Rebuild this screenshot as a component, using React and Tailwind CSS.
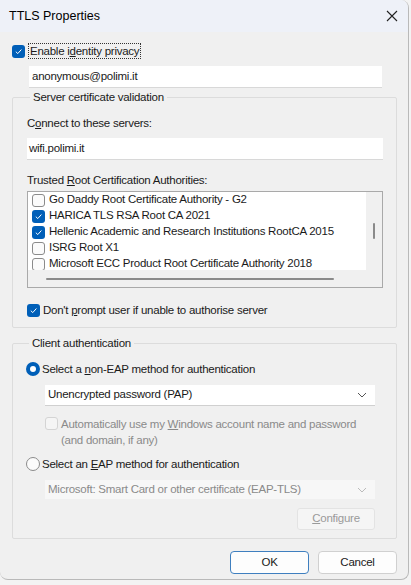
import React from "react";

const font = { fontFamily: '"Liberation Sans", Arial, sans-serif' };

function Check({ checked, disabled }) {
  if (checked) {
    return (
      <span className="inline-flex w-[13px] h-[13px] shrink-0 items-center justify-center rounded-[3px] bg-[#005fb8]">
        <svg width="9" height="9" viewBox="0 0 10 10">
          <path d="M2 5.2 L4.2 7.3 L8.2 2.8" fill="none" stroke="white" strokeWidth="1.1" />
        </svg>
      </span>
    );
  }
  return (
    <span
      className={
        "inline-block w-[13px] h-[13px] shrink-0 rounded-[3px] border " +
        (disabled ? "border-[#d4d4d4] bg-[#f5f5f5]" : "border-[#8b8b8b] bg-[#fbfbfb]")
      }
    />
  );
}

function Radio({ checked }) {
  if (checked) {
    return (
      <span className="inline-flex w-[14px] h-[14px] shrink-0 items-center justify-center rounded-full bg-[#005fb8]">
        <span className="w-[6px] h-[6px] rounded-full bg-white" />
      </span>
    );
  }
  return <span className="inline-block w-[14px] h-[14px] shrink-0 rounded-full border border-[#8b8b8b] bg-[#fbfbfb]" />;
}

function Chevron({ color }) {
  return (
    <svg width="10" height="6" viewBox="0 0 10 6">
      <path d="M1 1 L5 5 L9 1" fill="none" stroke={color} strokeWidth="1" />
    </svg>
  );
}

const certs = [
  { name: "Go Daddy Root Certificate Authority - G2", checked: false },
  { name: "HARICA TLS RSA Root CA 2021", checked: true },
  { name: "Hellenic Academic and Research Institutions RootCA 2015", checked: true },
  { name: "ISRG Root X1", checked: false },
  { name: "Microsoft ECC Product Root Certificate Authority 2018", checked: false },
];

export default function App() {
  return (
    <div className="w-[411px] h-[585px] bg-[#f3f3f3] text-[11.5px] tracking-[-0.25px] text-[#1a1a1a]" style={font}>
      <div className="w-[409px] h-[580px] bg-[#f0f0f0] rounded-tr-[8px] rounded-b-[8px] border-r border-b border-[#b9b9b9] overflow-hidden flex flex-col">
        {/* title bar */}
        <div className="h-[32px] bg-[#eef1f8] flex items-center justify-between pl-[9px] pr-[10px] shrink-0">
          <span className="text-[12.5px] tracking-normal text-black">TTLS Properties</span>
          <svg width="12" height="12" viewBox="0 0 12 12">
            <path d="M1 1 L11 11 M11 1 L1 11" stroke="#222" strokeWidth="1.1" />
          </svg>
        </div>

        <div className="pl-[12px] pr-[11px] pt-[12px] flex flex-col">
          {/* identity privacy */}
          <div className="flex items-center gap-[3px] h-[14px]">
            <Check checked />
            <span className="border border-dotted border-[#333] px-[1px] leading-[14px]">
              Enable i<span className="underline">d</span>entity privacy
            </span>
          </div>
          <div className="ml-[17px] mr-[15px] mt-[8px] h-[22px] bg-white border-b border-[#d8d8d8] flex items-center px-[3px]">
            anonymous@polimi.it
          </div>

          {/* Server certificate validation */}
          <fieldset className="mt-[2px] border border-[#dcdcdc] rounded-[2px] pl-[14px] pr-[13px] pb-[10px] pt-[12px]">
            <legend className="ml-[3px] px-[3px] leading-[14px]">Server certificate validation</legend>
            <div className="leading-[14px]">
              C<span className="underline">o</span>nnect to these servers:
            </div>
            <div className="mt-[8px] h-[22px] bg-white border-b border-[#d8d8d8] flex items-center px-[2px]">
              wifi.polimi.it
            </div>
            <div className="mt-[13px] leading-[14px]">
              Trusted <span className="underline">R</span>oot Certification Authorities:
            </div>
            <div className="mt-[4px] h-[97px] bg-white border border-[#a9a9a9] relative overflow-hidden">
              <div className="flex flex-col pl-[4px]">
                {certs.map((c) => (
                  <div key={c.name} className="flex items-center gap-[4px] h-[16px] whitespace-nowrap">
                    <Check checked={c.checked} />
                    <span>{c.name}</span>
                  </div>
                ))}
              </div>
              {/* vertical scrollbar */}
              <div className="absolute right-0 top-0 w-[16px] h-[78px] bg-[#f0f0f0] flex justify-center">
                <div className="mt-[31px] w-[2px] h-[16px] bg-[#8a8a8a] rounded-full" />
              </div>
              {/* horizontal scrollbar */}
              <div className="absolute left-0 bottom-0 w-full h-[17px] bg-[#f0f0f0] flex items-center">
                <div className="ml-[18px] w-[288px] h-[2px] bg-[#8a8a8a] rounded-full" />
              </div>
            </div>
            <div className="mt-[15px] flex items-center gap-[3px] leading-[14px]">
              <Check checked />
              <span>
                Don't <span className="underline">p</span>rompt user if unable to authorise server
              </span>
            </div>
          </fieldset>

          {/* Client authentication */}
          <fieldset className="mt-[8px] border border-[#dcdcdc] rounded-[2px] pl-[13px] pr-[21px] pb-[8px] pt-[12px]">
            <legend className="ml-[3px] px-[3px] leading-[14px]">Client authentication</legend>
            <div className="flex items-center gap-[2px] leading-[14px]">
              <Radio checked />
              <span>
                Select a <span className="underline">n</span>on-EAP method for authentication
              </span>
            </div>
            <div className="ml-[19px] mt-[9px] h-[21px] bg-white border-b border-[#d0d0d0] flex items-center justify-between pl-[3px] pr-[8px]">
              <span>Unencrypted password (PAP)</span>
              <Chevron color="#555" />
            </div>
            <div className="ml-[19px] mt-[10px] flex items-start gap-[3px] text-[#8a8a8a] leading-[16px] whitespace-nowrap">
              <span className="mt-[1px]">
                <Check disabled />
              </span>
              <span>
                Automatically use my <span className="underline">W</span>indows account name and password
                <br />
                (and domain, if any)
              </span>
            </div>
            <div className="mt-[9px] flex items-center gap-[2px] leading-[14px]">
              <Radio />
              <span>
                Select an <span className="underline">E</span>AP method for authentication
              </span>
            </div>
            <div className="ml-[19px] mt-[9px] h-[19px] bg-[#f7f7f7] flex items-center justify-between pl-[3px] pr-[8px] text-[#8a8a8a]">
              <span>Microsoft: Smart Card or other certificate (EAP-TLS)</span>
              <Chevron color="#bbb" />
            </div>
            <div className="mt-[9px] flex justify-end">
              <div className="w-[78px] h-[22px] rounded-[3px] border border-[#e3e3e3] bg-[#f5f5f5] flex items-center justify-center text-[#9a9a9a]">
                <span>
                  <span className="underline">C</span>onfigure
                </span>
              </div>
            </div>
          </fieldset>

          {/* buttons */}
          <div className="mt-[12px] flex justify-end gap-[9px]">
            <div className="w-[79px] h-[23px] rounded-[4px] border border-[#3f7fbf] bg-[#fdfdfd] flex items-center justify-center">
              OK
            </div>
            <div className="w-[79px] h-[23px] rounded-[4px] border border-[#d0d0d0] bg-[#fdfdfd] flex items-center justify-center">
              Cancel
            </div>
          </div>
        </div>
      </div>
    </div>
  );
}
